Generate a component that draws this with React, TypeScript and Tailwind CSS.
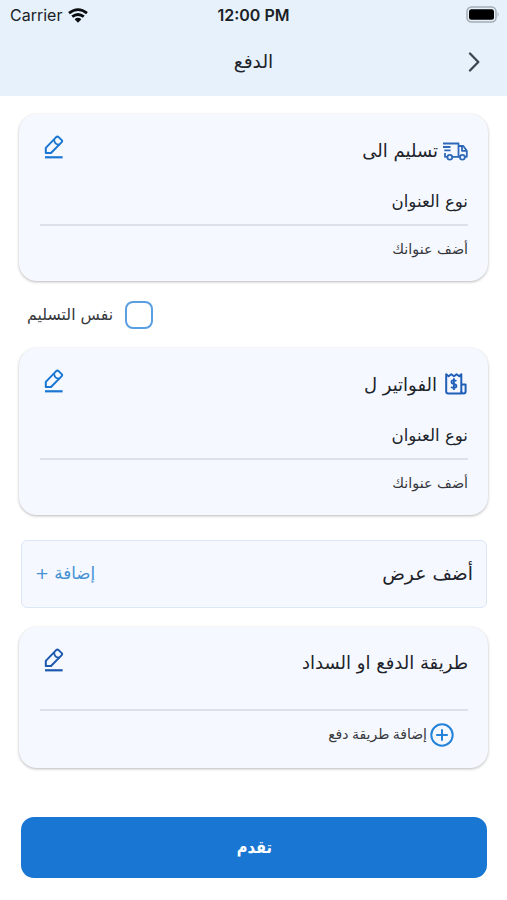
import type { ReactNode } from "react";

function PencilIcon({ className }: { className: string }) {
  return (
    <svg viewBox="0 0 20 24" className={`h-6 w-5 shrink-0 ${className}`} fill="none" stroke="currentColor" strokeWidth="2" strokeLinejoin="round" strokeLinecap="round">
      <path d="M1.8 18V12.9L12.2 2.1Q13.4 1.1 14.6 2.1L17.7 5.1Q18.6 6.1 17.7 7.1L7 18Z" />
      <path d="M10.2 5Q10.4 9.4 15 9.6" strokeWidth="1.8" />
      <path d="M1 22.3H18.6" strokeLinecap="butt" strokeWidth="2.2" />
    </svg>
  );
}

function TruckIcon() {
  return (
    <svg viewBox="0 0 25 19" className="mt-[2px] h-[19px] w-[25px] shrink-0 text-[#2f68b8]" fill="none" stroke="currentColor" strokeWidth="1.8" strokeLinejoin="round">
      <path d="M0 1.5H15.5V14.8H9.5" />
      <path d="M0 5H7.5M1.3 8.4H7.5M2 11V14.8H4" />
      <path d="M15.5 4H20.3L23.8 8.8V14.8H22M17 14.8H15.5M19 4V8.8H23.6" />
      <circle cx="6.8" cy="15.3" r="2.4" />
      <circle cx="19.4" cy="15.3" r="2.4" />
    </svg>
  );
}

function InvoiceIcon() {
  return (
    <svg viewBox="0 0 22 22" className="h-[22px] w-[22px] shrink-0 text-[#1f5fb8]" fill="none" stroke="currentColor" strokeWidth="2" strokeLinejoin="round">
      <path d="M1.2 1.2L3.7 3.2L6.3 1.2L9 3.2L11.6 1.2L14.2 3.2L16.3 1.2V20.5H3.2Q1.2 20.5 1.2 18.5Z" />
      <path d="M16.3 11.5H20.6V18.5Q20.6 20.5 18.5 20.5Q16.3 20.5 16.3 18.5" />
      <path d="M11.3 8.3Q10.6 7.2 8.8 7.2Q6.5 7.2 6.5 9Q6.5 10.6 8.9 11Q11.4 11.4 11.4 13.1Q11.4 14.9 8.9 14.9Q7 14.9 6.2 13.7M8.9 5.2V17" strokeWidth="1.8" />
    </svg>
  );
}

function AddressCard({ title, icon, gap }: { title: string; icon: ReactNode; gap: string }) {
  return (
    <section className="mx-[19px] h-[167px] rounded-[18px] bg-[#f5f8ff] pr-5 pl-[21px] shadow-[0_1px_3px_rgba(0,0,0,0.28)]">
      <div className="flex h-[72px] items-center justify-between">
        <h2 className={`flex items-center ${gap}`}>
          {icon}
          <span className="text-[18px] whitespace-nowrap">{title}</span>
        </h2>
        <PencilIcon className="mb-[7px] ml-1 text-[#1976d2]" />
      </div>
      <div className="flex h-[40px] items-start border-b-2 border-[#dbe0e9]">
        <span className="text-[16.6px] leading-[31px]">نوع العنوان</span>
      </div>
      <p className="pt-[11px] text-[14.3px] leading-[24px] text-[#35373b]">أضف عنوانك</p>
    </section>
  );
}

export default function App() {
  return (
    <main dir="rtl" className="h-[900px] w-[507px] overflow-hidden bg-white font-['DejaVu_Sans',sans-serif] text-[#202329]">
      <header className="h-24 bg-[#e6f1fc]">
        <div dir="ltr" className="grid h-[30px] grid-cols-3 items-center px-[10px] font-['Inter',sans-serif] text-[#1b1f26]">
          <div className="flex items-center gap-[6px] text-[16px]">
            <span>Carrier</span>
            <svg viewBox="0 0 20 15" className="h-[15px] w-5" fill="none" stroke="#0b0d10" strokeWidth="2.8">
              <path d="M1 5.2Q10-2 19 5.2M4.2 8.7Q10 4.3 15.8 8.7" />
              <path d="M6.6 11.2Q10 8.5 13.4 11.2L10 14.8Z" fill="#0b0d10" stroke="none" />
            </svg>
          </div>
          <span className="text-center text-[16px] font-semibold whitespace-nowrap">12:00 PM</span>
          <svg viewBox="0 0 34 17" className="mr-[-3px] mb-[2px] h-[17px] w-[34px] justify-self-end">
            <rect x="1" y="1" width="29" height="15" rx="4.5" fill="none" stroke="#a5acb4" strokeWidth="1.5" />
            <rect x="3" y="3.2" width="25" height="10.6" rx="2.5" fill="#000" />
            <path d="M31.6 6Q33.6 8.5 31.6 11Z" fill="#a5acb4" />
          </svg>
        </div>
        <div className="grid h-[64px] grid-cols-3 items-center px-[27px]">
          <svg viewBox="0 0 12 20" className="h-5 w-3 text-[#3c444d]" fill="none" stroke="currentColor" strokeWidth="2.3" strokeLinecap="round" strokeLinejoin="round">
            <path d="M2 1.5L10.3 10L2 18.5" />
          </svg>
          <h1 className="text-center text-[18.7px]">الدفع</h1>
        </div>
      </header>

      <div className="h-[18px]" />
      <AddressCard title="تسليم الى" icon={<TruckIcon />} gap="gap-[5px]" />

      <label className="flex h-[67px] items-center justify-end gap-[12px] pl-[27px]">
        <span className="h-7 w-7 rounded-[8px] border-2 border-[#5b9fe3] bg-white" />
        <span className="text-[15.8px] whitespace-nowrap text-[#35373b]">نفس التسليم</span>
      </label>

      <AddressCard title="الفواتير ل" icon={<span className="mr-px"><InvoiceIcon /></span>} gap="gap-[8px]" />

      <section className="mr-5 ml-[21px] mt-[25px] flex h-[68px] items-center justify-between rounded-[6px] border border-[#dbe7f7] bg-[#f5f8ff] px-[13px]">
        <h2 className="text-[18.8px]">أضف عرض</h2>
        <button className="text-[16.7px] text-[#4691d4]">إضافة +</button>
      </section>

      <section className="mx-[19px] mt-[19px] h-[141px] rounded-[18px] bg-[#f5f8ff] pr-5 pl-[21px] shadow-[0_1px_3px_rgba(0,0,0,0.28)]">
        <div className="flex h-[84px] items-start justify-between border-b-2 border-[#dbe0e9] pt-[20px]">
          <h2 className="text-[18px] leading-[32px] whitespace-nowrap">طريقة الدفع او السداد</h2>
          <PencilIcon className="mt-px ml-1 text-[#1c58ae]" />
        </div>
        <button className="flex h-[47px] items-center gap-[3px] pr-[14px] text-[#35373b]">
          <svg viewBox="0 0 24 24" className="h-6 w-6" fill="none" stroke="#2484da" strokeWidth="2">
            <circle cx="12" cy="12" r="10.7" />
            <path d="M12 6.2V17.8M6.2 12H17.8" />
          </svg>
          <span className="text-[14px] whitespace-nowrap [word-spacing:-1px]">إضافة طريقة دفع</span>
        </button>
      </section>

      <button className="mr-5 mt-[49px] flex h-[61px] w-[466px] items-center justify-center rounded-[13px] bg-[#1976d2] text-[17px] font-bold text-white">
        <span className="scale-x-[0.86]">تقدم</span>
      </button>
    </main>
  );
}
